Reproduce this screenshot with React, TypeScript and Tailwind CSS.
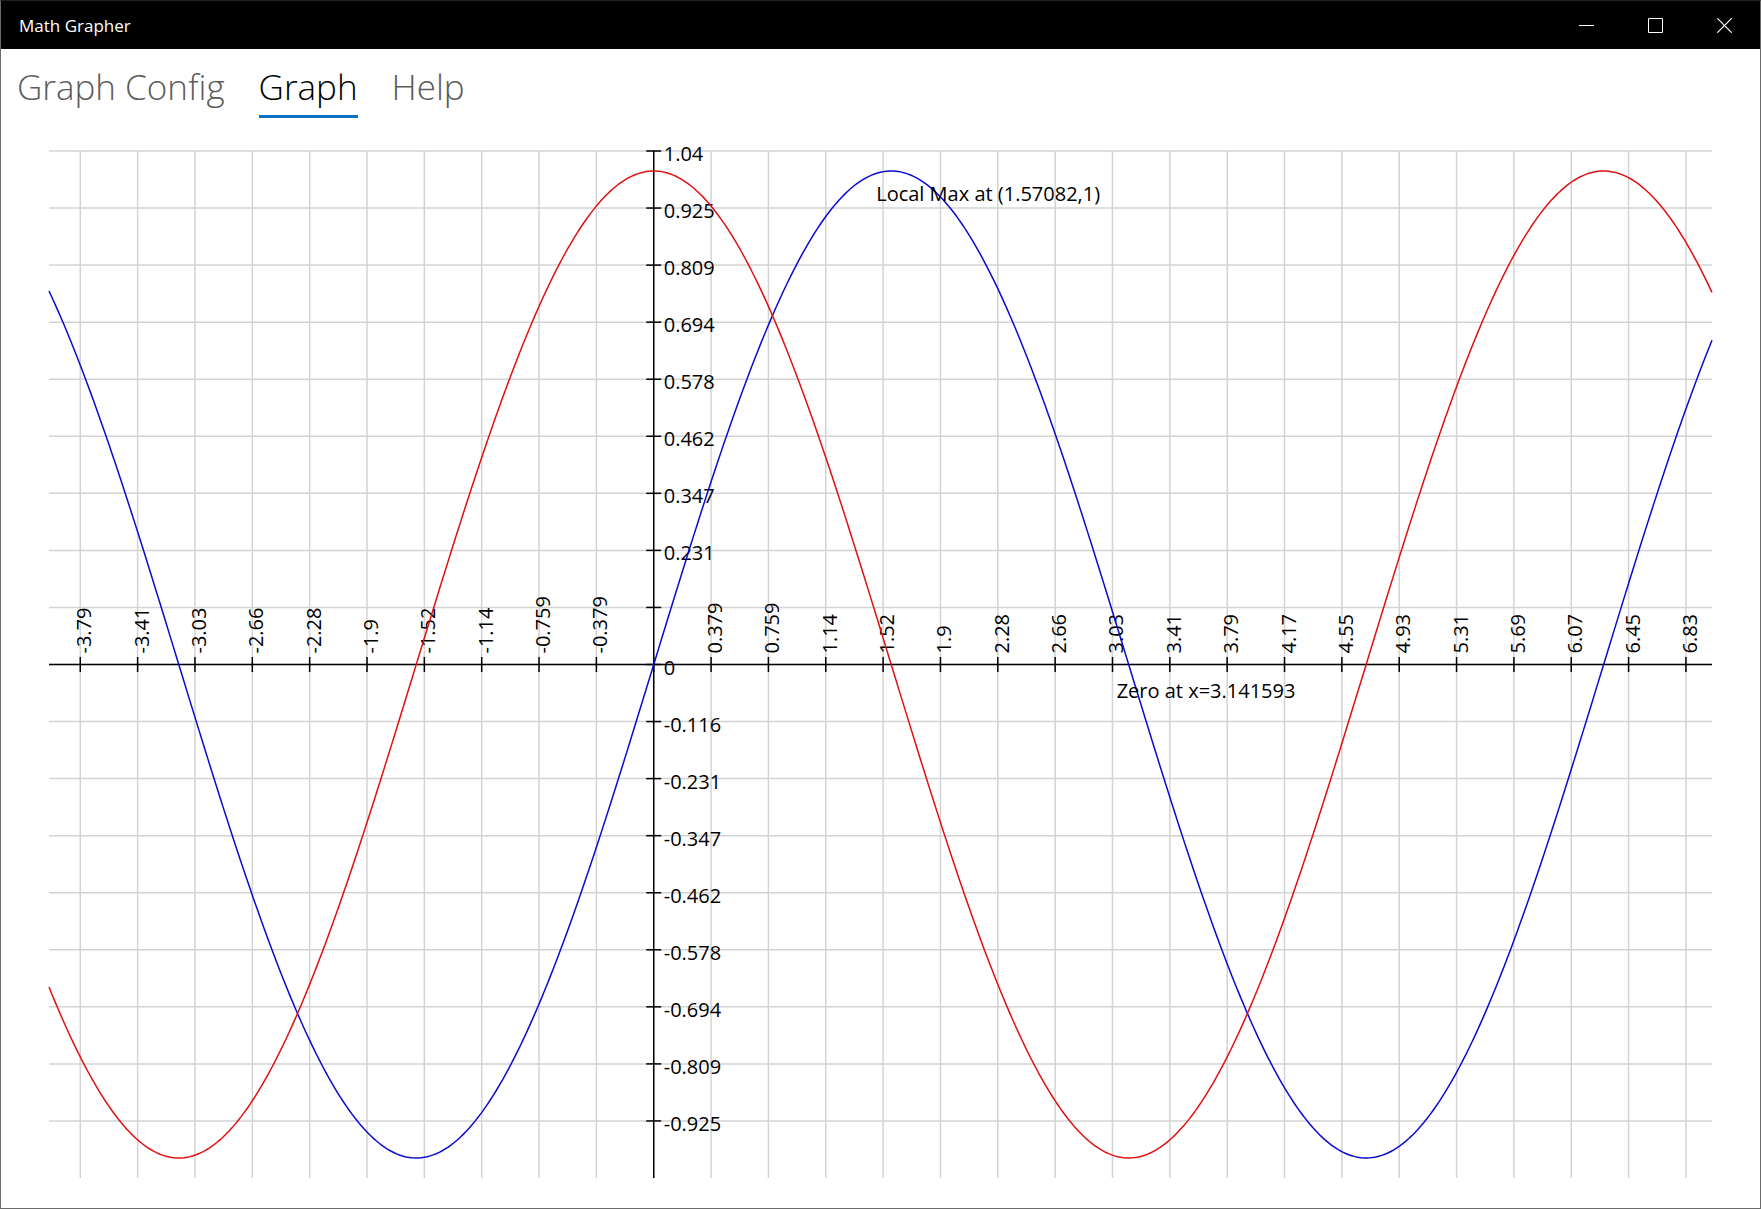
import { useState } from "react";

const PLOT = { width: 1663, height: 1027 };
const RANGE = { xMin: -4, xMax: 7, yMax: 1.0405 };
const X_STEP = (RANGE.xMax - RANGE.xMin) / 29;
const Y_STEP = RANGE.yMax / 9;

const toX = (x: number) =>
  ((x - RANGE.xMin) / (RANGE.xMax - RANGE.xMin)) * PLOT.width;
const toY = (y: number) => (1 - y / RANGE.yMax) * (PLOT.height / 2);

const label = (value: number) => String(Number(value.toPrecision(3)));

const range = (from: number, to: number) =>
  Array.from({ length: to - from + 1 }, (_, i) => from + i);

const curve = (fn: (x: number) => number) =>
  range(0, 554)
    .map((i) => {
      const x = RANGE.xMin + (i / 554) * (RANGE.xMax - RANGE.xMin);
      return `${toX(x).toFixed(2)},${toY(fn(x)).toFixed(2)}`;
    })
    .join(" ");

const xTicks = range(-10, 18);
const yTicks = range(-8, 9);

const tabs = ["Graph Config", "Graph", "Help"];

const TitleBar = () => (
  <header className="flex h-12 items-center justify-between bg-black pr-px text-white">
    <h1 className="pt-px pl-[18px] text-[17px] leading-6">Math Grapher</h1>
    <div className="flex h-full">
      <button aria-label="Minimize" className="flex w-[69px] items-center justify-center">
        <svg width="15" height="15" viewBox="0 0 15 15" fill="none" stroke="currentColor">
          <path d="M0 7.5H15" />
        </svg>
      </button>
      <button aria-label="Maximize" className="flex w-[69px] items-center justify-center">
        <svg width="15" height="15" viewBox="0 0 15 15" fill="none" stroke="currentColor">
          <path d="M0.5 0.5H14.5V14.5H0.5Z" />
        </svg>
      </button>
      <button aria-label="Close" className="flex w-[69px] items-center justify-center">
        <svg width="15" height="15" viewBox="0 0 15 15" fill="none" stroke="currentColor">
          <path d="M0.3 0.3L14.7 14.7M14.7 0.3L0.3 14.7" strokeWidth="1.2" />
        </svg>
      </button>
    </div>
  </header>
);

const Graph = () => {
  const originX = toX(0);
  const originY = toY(0);

  return (
    <svg
      viewBox={`0 0 ${PLOT.width} ${PLOT.height}`}
      className="block w-full overflow-visible"
      role="img"
      aria-label="Graph of sine and cosine"
    >
      {/* Grid */}
      <g stroke="#d3d3d3" strokeWidth="1.5">
        {xTicks.map((i) => (
          <line key={i} x1={toX(i * X_STEP)} x2={toX(i * X_STEP)} y1={0} y2={PLOT.height} />
        ))}
        {yTicks.map((i) => (
          <line key={i} x1={0} x2={PLOT.width} y1={toY(i * Y_STEP)} y2={toY(i * Y_STEP)} />
        ))}
      </g>

      {/* Axes */}
      <g stroke="#000" strokeWidth="1.5">
        <line x1={0} x2={PLOT.width} y1={originY} y2={originY} />
        <line x1={originX} x2={originX} y1={0} y2={PLOT.height} />
        {xTicks.map((i) => (
          <line
            key={i}
            x1={toX(i * X_STEP)}
            x2={toX(i * X_STEP)}
            y1={originY - 7.5}
            y2={originY + 7.5}
          />
        ))}
        {yTicks.map((i) => (
          <line
            key={i}
            x1={originX - 7.5}
            x2={originX + 7.5}
            y1={toY(i * Y_STEP)}
            y2={toY(i * Y_STEP)}
          />
        ))}
      </g>

      <g className="text-[20px]">
        {xTicks
          .filter((i) => i !== 0)
          .map((i) => (
            <text
              key={i}
              transform={`translate(${toX(i * X_STEP) + 11} ${originY - 11}) rotate(-90)`}
            >
              {label(i * X_STEP)}
            </text>
          ))}
        {yTicks
          .filter((i) => i !== 1)
          .map((i) => (
            <text key={i} x={originX + 10} y={toY(i * Y_STEP) + 10}>
              {label(i * Y_STEP)}
            </text>
          ))}
      </g>

      <g fill="none" strokeWidth="1.5">
        <polyline points={curve(Math.sin)} stroke="#0a0ad2" />
        <polyline points={curve(Math.cos)} stroke="#e01010" />
      </g>

      <g className="text-[20px]">
        <text x={toX(Math.PI / 2) - 15} y={50}>
          Local Max at (1.57082,1)
        </text>
        <text x={toX(Math.PI) - 12} y={originY + 33}>
          Zero at x=3.141593
        </text>
      </g>
    </svg>
  );
};

const App = () => {
  const [active, setActive] = useState("Graph");

  return (
    <div className="flex min-h-screen flex-col border border-[#6b6b6b] border-t-[#222] bg-white font-['Open_Sans','Noto_Sans',sans-serif] text-black">
      <TitleBar />
      <nav className="flex gap-[34px] px-4 pt-[15px]">
        {tabs.map((tab) => (
          <button
            key={tab}
            onClick={() => setActive(tab)}
            className={
              active === tab
                ? "border-b-3 border-[#0b72c4] pb-[5px] text-[35px] leading-[46px] font-light"
                : "border-b-3 border-transparent pb-[5px] text-[35px] leading-[46px] font-light text-[#5c5c5c]"
            }
          >
            {tab}
          </button>
        ))}
      </nav>
      <main className="px-12 pt-[33px] pb-[30px]">
        <Graph />
      </main>
    </div>
  );
};

export default App;
